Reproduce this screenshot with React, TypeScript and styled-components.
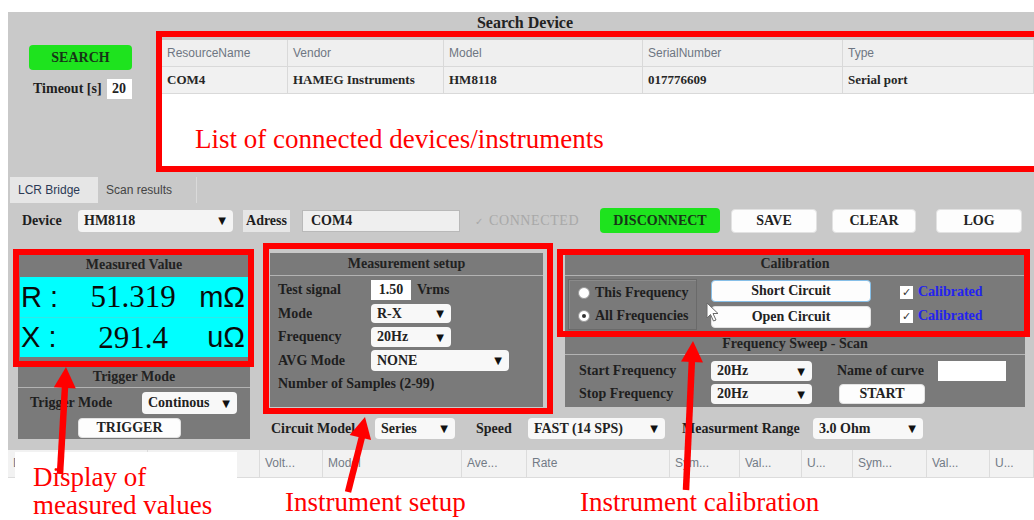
import React from "react";
import styled, { createGlobalStyle } from "styled-components";

const SERIF = `"Liberation Serif", "Times New Roman", serif`;
const SANS = `"Liberation Sans", Arial, sans-serif`;

const GlobalStyle = createGlobalStyle`
  html, body {
    margin: 0;
    padding: 0;
    background: #ffffff;
  }
  body {
    font-family: ${SERIF};
    color: #1e1e1e;
  }
`;

type Box = { $x: number; $y: number; $w: number; $h: number };
type At = { $x: number; $y: number; $lh?: number };

// ---------- page shell ----------

const Page = styled.div`
  position: relative;
  width: 1034px;
  height: 520px;
  overflow: hidden;
  padding: 12px 0 0 8px;
  box-sizing: border-box;
`;

const Shell = styled.div`
  width: 1026px;
  background: #c9c9c9;
  font-family: ${SERIF};
  color: #1e1e1e;
`;

// ---------- search device ----------

const SearchTitle = styled.div`
  height: 28px;
  line-height: 22px;
  padding-left: 8px;
  text-align: center;
  font-size: 16px;
  font-weight: bold;
  color: #222;
`;

const SearchBody = styled.div`
  height: 137px;
  display: flex;
`;

const SearchSide = styled.div`
  width: 154px;
  padding: 5px 0 0 21px;
  box-sizing: border-box;
`;

const GreenButton = styled.div<{ $w: number; $ml?: number }>`
  width: ${(p) => p.$w}px;
  height: 25px;
  margin-left: ${(p) => p.$ml ?? 0}px;
  background: #1ee31e;
  border-radius: 4px;
  display: flex;
  align-items: center;
  justify-content: center;
  font-size: 14px;
  font-weight: bold;
  color: #173417;
  flex-shrink: 0;
`;

const TimeoutRow = styled.div`
  margin-top: 9px;
  padding-left: 4px;
  display: flex;
  align-items: center;
  gap: 5px;
  font-size: 14px;
  font-weight: bold;
`;

const SmallInput = styled.div<{ $w: number }>`
  width: ${(p) => p.$w}px;
  height: 20px;
  background: #ffffff;
  display: flex;
  align-items: center;
  justify-content: center;
  font-size: 14px;
  font-weight: bold;
  color: #222;
`;

const DeviceTable = styled.div`
  flex: 1;
  height: 130px;
  background: #ffffff;
`;

const DeviceGrid = styled.div<{ $head?: boolean }>`
  display: grid;
  grid-template-columns: 126px 156px 199px 200px 1fr;
  height: 26px;
  background: ${(p) => (p.$head ? "#efefef" : "#f1f1f1")};
  border-bottom: 1px solid #d9d9d9;
  font-family: ${(p) => (p.$head ? SANS : SERIF)};
  font-size: ${(p) => (p.$head ? 12 : 13)}px;
  font-weight: ${(p) => (p.$head ? "normal" : "bold")};
  color: ${(p) => (p.$head ? "#6e7682" : "#262626")};
`;

const DeviceCell = styled.div`
  padding-left: 5px;
  line-height: 26px;
  border-right: 1px solid #d9d9d9;
  white-space: nowrap;
  overflow: hidden;
`;

// ---------- tabs and device bar ----------

const Tabs = styled.div`
  height: 26px;
  display: flex;
  padding-left: 2px;
  font-family: ${SANS};
  font-size: 12px;
`;

const Tab = styled.div<{ $active?: boolean; $w: number }>`
  width: ${(p) => p.$w}px;
  padding-left: 8px;
  box-sizing: border-box;
  line-height: 26px;
  background: ${(p) => (p.$active ? "#e6e6e6" : "transparent")};
  color: ${(p) => (p.$active ? "#2b3a55" : "#444")};
  border-right: ${(p) => (p.$active ? "none" : "1px solid #dadada")};
`;

const DeviceBar = styled.div`
  margin-top: 5px;
  height: 25px;
  padding-left: 14px;
  display: flex;
  align-items: center;
  font-size: 14px;
  font-weight: bold;
`;

const BarLabel = styled.div<{ $w: number }>`
  width: ${(p) => p.$w}px;
  flex-shrink: 0;
`;

const Select = styled.div<{ $w: number; $h?: number; $ml?: number; $bg?: string }>`
  width: ${(p) => p.$w}px;
  height: ${(p) => p.$h ?? 21}px;
  margin-left: ${(p) => p.$ml ?? 0}px;
  padding: 0 7px 0 6px;
  box-sizing: border-box;
  background: ${(p) => p.$bg ?? "#f8f8f8"};
  border-radius: 4px;
  display: flex;
  align-items: center;
  justify-content: space-between;
  font-size: 14px;
  font-weight: bold;
  color: #222;
  flex-shrink: 0;
`;

const Caret = styled.span`
  font-family: "DejaVu Sans", sans-serif;
  font-size: 10px;
  color: #111;
`;

const AddrLabel = styled.div`
  width: 47px;
  height: 22px;
  margin-left: 10px;
  background: #e6e6e6;
  display: flex;
  align-items: center;
  justify-content: center;
`;

const AddrInput = styled.div`
  width: 158px;
  height: 22px;
  margin-left: 12px;
  padding-left: 8px;
  box-sizing: border-box;
  background: #efefef;
  border: 1px solid #b9b9b9;
  display: flex;
  align-items: center;
`;

const Connected = styled.div`
  width: 115px;
  margin-left: 15px;
  font-family: ${SERIF};
  font-weight: normal;
  letter-spacing: 0.6px;
  color: #a8a8a8;
  white-space: nowrap;
`;

const Tick = styled.span`
  font-family: "DejaVu Sans", sans-serif;
  font-size: 10px;
  margin-right: 5px;
`;

const WhiteButton = styled.div<{ $w: number; $h?: number; $ml?: number; $focus?: boolean }>`
  width: ${(p) => p.$w}px;
  height: ${(p) => p.$h ?? 24}px;
  margin-left: ${(p) => p.$ml ?? 0}px;
  box-sizing: border-box;
  background: #fdfdfd;
  border: 1px solid ${(p) => (p.$focus ? "#86bfe8" : "#e2e2e2")};
  border-radius: 4px;
  display: flex;
  align-items: center;
  justify-content: center;
  font-size: 14px;
  font-weight: bold;
  color: #222;
  flex-shrink: 0;
`;

// ---------- main panels ----------

const Main = styled.div`
  margin-top: 20px;
  padding-left: 10px;
  display: flex;
  gap: 20px;
`;

const Panel = styled.div<{ $w: number; $h: number }>`
  width: ${(p) => p.$w}px;
  height: ${(p) => p.$h}px;
  background: #7a7a7a;
  box-sizing: border-box;
`;

const PanelHead = styled.div<{ $h?: number; $mt?: number; $line?: boolean }>`
  height: ${(p) => p.$h ?? 22}px;
  line-height: ${(p) => p.$h ?? 22}px;
  margin-top: ${(p) => p.$mt ?? 0}px;
  border-bottom: ${(p) => (p.$line === false ? "none" : "1px solid #b3b3b3")};
  text-align: center;
  font-size: 14px;
  font-weight: bold;
  color: #222;
`;

const Readout = styled.div`
  margin: 0 2px;
  background: #00ffff;
`;

const ReadoutRow = styled.div`
  height: 40px;
  display: grid;
  grid-template-columns: 62px 1fr 62px;
  align-items: center;
  padding: 0 3px 0 1px;
  & + & {
    height: 39px;
    border-top: 1px solid #33e6e6;
  }
`;

const ReadSym = styled.span`
  font-family: ${SANS};
  font-size: 29px;
  color: #0a0a0a;
  white-space: pre;
`;

const ReadNum = styled.span`
  font-family: ${SERIF};
  font-size: 31px;
  text-align: center;
  color: #0a0a0a;
`;

const ReadUnit = styled.span`
  font-family: ${SANS};
  font-size: 29px;
  text-align: right;
  color: #0a0a0a;
`;

const TriggerBody = styled.div`
  padding: 4px 13px 0 12px;
`;

const TriggerRow = styled.div`
  display: flex;
  align-items: center;
  justify-content: space-between;
  font-size: 14px;
  font-weight: bold;
`;

const TriggerButton = styled(WhiteButton)`
  margin-top: 4px;
`;

const RightArea = styled.div`
  display: flex;
  flex-direction: column;
`;

const PanelRow = styled.div`
  display: flex;
  gap: 22px;
`;

const SetupGrid = styled.div`
  padding: 3.5px 8px 0;
  display: grid;
  grid-template-columns: 93px 1fr;
  grid-auto-rows: 21px;
  row-gap: 2.5px;
  align-items: center;
  font-size: 14px;
  font-weight: bold;
`;

const Inline = styled.div`
  display: flex;
  align-items: center;
  gap: 6px;
`;

const Wide = styled.div`
  grid-column: 1 / span 2;
`;

const Stack = styled.div`
  display: flex;
  flex-direction: column;
`;

const CalBody = styled.div`
  padding: 3px 3px 0;
  display: flex;
`;

const RadioGroup = styled.div`
  width: 129px;
  height: 51px;
  box-sizing: border-box;
  padding: 3px 0 0 9px;
  border: 1px solid #6a6a6a;
  box-shadow: inset 1px 1px 0 #8a8a8a;
  display: flex;
  flex-direction: column;
  gap: 3px;
`;

const RadioRow = styled.div`
  height: 20px;
  display: flex;
  align-items: center;
  gap: 5px;
  font-size: 14px;
  font-weight: bold;
  white-space: nowrap;
`;

const RadioDot = styled.span<{ $on?: boolean }>`
  width: 12px;
  height: 12px;
  border-radius: 50%;
  background: #ffffff;
  border: 1px solid #9a9a9a;
  box-sizing: border-box;
  display: flex;
  align-items: center;
  justify-content: center;
  &::after {
    content: "";
    width: 4px;
    height: 4px;
    border-radius: 50%;
    background: ${(p) => (p.$on ? "#333" : "transparent")};
  }
`;

const CalButtons = styled.div`
  margin: 1px 0 0 14px;
  display: flex;
  flex-direction: column;
  gap: 4px;
`;

const CalChecks = styled.div`
  margin: 2px 0 0 29px;
  display: flex;
  flex-direction: column;
  gap: 2px;
`;

const CheckRow = styled.div`
  height: 22px;
  display: flex;
  align-items: center;
  gap: 5px;
  font-size: 14px;
  font-weight: bold;
  color: #2323f0;
`;

const CheckBox = styled.span`
  width: 13px;
  height: 13px;
  background: #ffffff;
  display: flex;
  align-items: center;
  justify-content: center;
  font-family: "DejaVu Sans", sans-serif;
  font-size: 11px;
  color: #333;
`;

const SweepGrid = styled.div`
  padding: 6px 0 0 14px;
  display: grid;
  grid-template-columns: 132px 101px 25px 101px 68px;
  grid-template-rows: 20px 20px;
  row-gap: 3px;
  align-items: center;
  font-size: 14px;
  font-weight: bold;
`;

const CircuitRow = styled.div`
  margin-top: 11px;
  height: 21px;
  display: grid;
  grid-template-columns: 105px 80px 73px 137px 148px 110px;
  align-items: center;
  font-size: 14px;
  font-weight: bold;
`;

const CircuitLabel = styled.div<{ $pl: number }>`
  padding-left: ${(p) => p.$pl}px;
  white-space: nowrap;
`;

// ---------- results table header ----------

const ResultHead = styled.div`
  margin-top: 11px;
  height: 27px;
  display: grid;
  grid-template-columns: 140px 112px 63px 139px 65px 143px 70px 62px 51px 74px 63px 44px;
  background: #f2f2f2;
  border-bottom: 1px solid #dcdcdc;
  font-family: ${SANS};
  font-size: 12px;
  color: #727b86;
`;

const ResultCell = styled.div`
  padding-left: 5px;
  line-height: 27px;
  border-right: 1px solid #dcdcdc;
  white-space: nowrap;
  overflow: hidden;
`;

// ---------- annotation layer ----------

const Overlay = styled.div`
  position: absolute;
  inset: 0;
  pointer-events: none;
`;

const RedFrame = styled.div<Box>`
  position: absolute;
  left: ${(p) => p.$x}px;
  top: ${(p) => p.$y}px;
  width: ${(p) => p.$w}px;
  height: ${(p) => p.$h}px;
  border: 6px solid #ff0000;
  box-sizing: border-box;
`;

const NotePatch = styled.div`
  position: absolute;
  left: 15px;
  top: 452px;
  width: 222px;
  height: 68px;
  background: #ffffff;
`;

const Note = styled.div<At>`
  position: absolute;
  left: ${(p) => p.$x}px;
  top: ${(p) => p.$y}px;
  font-family: ${SERIF};
  font-size: 27px;
  line-height: ${(p) => p.$lh ?? 32}px;
  color: #ff0000;
  white-space: nowrap;
`;

const Drawing = styled.svg`
  position: absolute;
  left: 0;
  top: 0;
`;

const Cursor = styled.svg`
  position: absolute;
  left: 706px;
  top: 302px;
`;

// arrowhead polygon for a shaft running from tail to tip
const arrowHead = (tx: number, ty: number, hx: number, hy: number, len = 21, half = 11) => {
  const dx = hx - tx;
  const dy = hy - ty;
  const d = Math.hypot(dx, dy);
  const ux = dx / d;
  const uy = dy / d;
  const bx = hx - ux * len;
  const by = hy - uy * len;
  return `${hx},${hy} ${bx - uy * half},${by + ux * half} ${bx + uy * half},${by - ux * half}`;
};

const arrows = [
  { tx: 60, ty: 474, hx: 66, hy: 367 },
  { tx: 348, ty: 492, hx: 365, hy: 417 },
  { tx: 686, ty: 490, hx: 693, hy: 341 },
];

const devices = {
  head: ["ResourceName", "Vendor", "Model", "SerialNumber", "Type"],
  rows: [["COM4", "HAMEG Instruments", "HM8118", "017776609", "Serial port"]],
};

const resultCols = ["D...", "", "Volt...", "Model", "Ave...", "Rate", "Sym...", "Val...", "U...", "Sym...", "Val...", "U..."];

export default function App() {
  return (
    <>
      <GlobalStyle />
      <Page>
        <Shell>
          <SearchTitle>Search Device</SearchTitle>
          <SearchBody>
            <SearchSide>
              <GreenButton $w={103}>SEARCH</GreenButton>
              <TimeoutRow>
                <span>Timeout [s]</span>
                <SmallInput $w={25}>20</SmallInput>
              </TimeoutRow>
            </SearchSide>
            <DeviceTable>
              <DeviceGrid $head>
                {devices.head.map((h) => (
                  <DeviceCell key={h}>{h}</DeviceCell>
                ))}
              </DeviceGrid>
              {devices.rows.map((r) => (
                <DeviceGrid key={r[0]}>
                  {r.map((c) => (
                    <DeviceCell key={c}>{c}</DeviceCell>
                  ))}
                </DeviceGrid>
              ))}
            </DeviceTable>
          </SearchBody>

          <Tabs>
            <Tab $active $w={88}>LCR Bridge</Tab>
            <Tab $w={99}>Scan results</Tab>
          </Tabs>

          <DeviceBar>
            <BarLabel $w={56}>Device</BarLabel>
            <Select $w={155} $h={22} $bg="#f4f4f4">
              <span>HM8118</span>
              <Caret>▼</Caret>
            </Select>
            <AddrLabel>Adress</AddrLabel>
            <AddrInput>COM4</AddrInput>
            <Connected>
              <Tick>✓</Tick>CONNECTED
            </Connected>
            <GreenButton $w={120} $ml={10}>DISCONNECT</GreenButton>
            <WhiteButton $w={86} $ml={11}>SAVE</WhiteButton>
            <WhiteButton $w={84} $ml={15}>CLEAR</WhiteButton>
            <WhiteButton $w={86} $ml={20}>LOG</WhiteButton>
          </DeviceBar>

          <Main>
            <Panel $w={232} $h={186}>
              <PanelHead $h={24} $line={false}>Measured Value</PanelHead>
              <Readout>
                <ReadoutRow>
                  <ReadSym>R :</ReadSym>
                  <ReadNum>51.319</ReadNum>
                  <ReadUnit>mΩ</ReadUnit>
                </ReadoutRow>
                <ReadoutRow>
                  <ReadSym>X :</ReadSym>
                  <ReadNum>291.4</ReadNum>
                  <ReadUnit>uΩ</ReadUnit>
                </ReadoutRow>
              </Readout>
              <PanelHead $h={20} $mt={10}>Trigger Mode</PanelHead>
              <TriggerBody>
                <TriggerRow>
                  <span>Trigger Mode</span>
                  <Select $w={95} $h={22}>
                    <span>Continous</span>
                    <Caret>▼</Caret>
                  </Select>
                </TriggerRow>
                <TriggerButton $w={103} $h={20} $ml={48}>TRIGGER</TriggerButton>
              </TriggerBody>
            </Panel>

            <RightArea>
              <PanelRow>
                <Panel $w={273} $h={154}>
                  <PanelHead>Measurement setup</PanelHead>
                  <SetupGrid>
                    <span>Test signal</span>
                    <Inline>
                      <SmallInput $w={40}>1.50</SmallInput>
                      <span>Vrms</span>
                    </Inline>
                    <span>Mode</span>
                    <Select $w={80} $h={19}>
                      <span>R-X</span>
                      <Caret>▼</Caret>
                    </Select>
                    <span>Frequency</span>
                    <Select $w={80} $h={20}>
                      <span>20Hz</span>
                      <Caret>▼</Caret>
                    </Select>
                    <span>AVG Mode</span>
                    <Select $w={138} $h={21}>
                      <span>NONE</span>
                      <Caret>▼</Caret>
                    </Select>
                    <Wide>Number of Samples (2-99)</Wide>
                  </SetupGrid>
                </Panel>

                <Stack>
                  <Panel $w={460} $h={80}>
                    <PanelHead>Calibration</PanelHead>
                    <CalBody>
                      <RadioGroup>
                        <RadioRow>
                          <RadioDot />
                          This Frequency
                        </RadioRow>
                        <RadioRow>
                          <RadioDot $on />
                          All Frequencies
                        </RadioRow>
                      </RadioGroup>
                      <CalButtons>
                        <WhiteButton $w={160} $h={22} $focus>Short Circuit</WhiteButton>
                        <WhiteButton $w={160} $h={22}>Open Circuit</WhiteButton>
                      </CalButtons>
                      <CalChecks>
                        <CheckRow>
                          <CheckBox>✓</CheckBox>Calibrated
                        </CheckRow>
                        <CheckRow>
                          <CheckBox>✓</CheckBox>Calibrated
                        </CheckRow>
                      </CalChecks>
                    </CalBody>
                  </Panel>
                  <Panel $w={460} $h={74}>
                    <PanelHead $h={21}>Frequency Sweep - Scan</PanelHead>
                    <SweepGrid>
                      <span>Start Frequency</span>
                      <Select $w={101} $h={20}>
                        <span>20Hz</span>
                        <Caret>▼</Caret>
                      </Select>
                      <span />
                      <span>Name of curve</span>
                      <SmallInput $w={68} />
                      <span>Stop Frequency</span>
                      <Select $w={101} $h={20}>
                        <span>20Hz</span>
                        <Caret>▼</Caret>
                      </Select>
                      <span />
                      <WhiteButton $w={86} $h={20} $ml={2}>START</WhiteButton>
                    </SweepGrid>
                  </Panel>
                </Stack>
              </PanelRow>

              <CircuitRow>
                <CircuitLabel $pl={1}>Circuit Model</CircuitLabel>
                <Select $w={80} $h={21}>
                  <span>Series</span>
                  <Caret>▼</Caret>
                </Select>
                <CircuitLabel $pl={21}>Speed</CircuitLabel>
                <Select $w={137} $h={21}>
                  <span>FAST (14 SPS)</span>
                  <Caret>▼</Caret>
                </Select>
                <CircuitLabel $pl={17}>Measurment Range</CircuitLabel>
                <Select $w={110} $h={21}>
                  <span>3.0 Ohm</span>
                  <Caret>▼</Caret>
                </Select>
              </CircuitRow>
            </RightArea>
          </Main>

          <ResultHead>
            {resultCols.map((c, i) => (
              <ResultCell key={i}>{c}</ResultCell>
            ))}
          </ResultHead>
        </Shell>

        <Overlay>
          <Cursor width="14" height="20" viewBox="0 0 14 20">
            <path d="M1 1 L1 16 L4.5 12.5 L7.5 19 L10 18 L7 11.5 L12 11.5 Z" fill="#ffffff" stroke="#6a6a6a" strokeWidth="1" />
          </Cursor>
          <RedFrame $x={156} $y={31} $w={900} $h={141} />
          <RedFrame $x={13} $y={249} $w={241} $h={118} />
          <RedFrame $x={263} $y={243} $w={290} $h={171} />
          <RedFrame $x={557} $y={249} $w={473} $h={88} />
          <NotePatch />
          <Drawing width="1034" height="520">
            {arrows.map((a, i) => (
              <g key={i}>
                <line x1={a.tx} y1={a.ty} x2={a.hx - (a.hx - a.tx) * 0.15} y2={a.hy + 18} stroke="#ff0000" strokeWidth="6.5" />
                <polygon points={arrowHead(a.tx, a.ty, a.hx, a.hy)} fill="#ff0000" />
              </g>
            ))}
          </Drawing>
          <Note $x={195} $y={123}>List of connected devices/instruments</Note>
          <Note $x={33} $y={463} $lh={28}>
            Display of
            <br />
            measured values
          </Note>
          <Note $x={285} $y={486}>Instrument setup</Note>
          <Note $x={580} $y={486}>Instrument calibration</Note>
        </Overlay>
      </Page>
    </>
  );
}
